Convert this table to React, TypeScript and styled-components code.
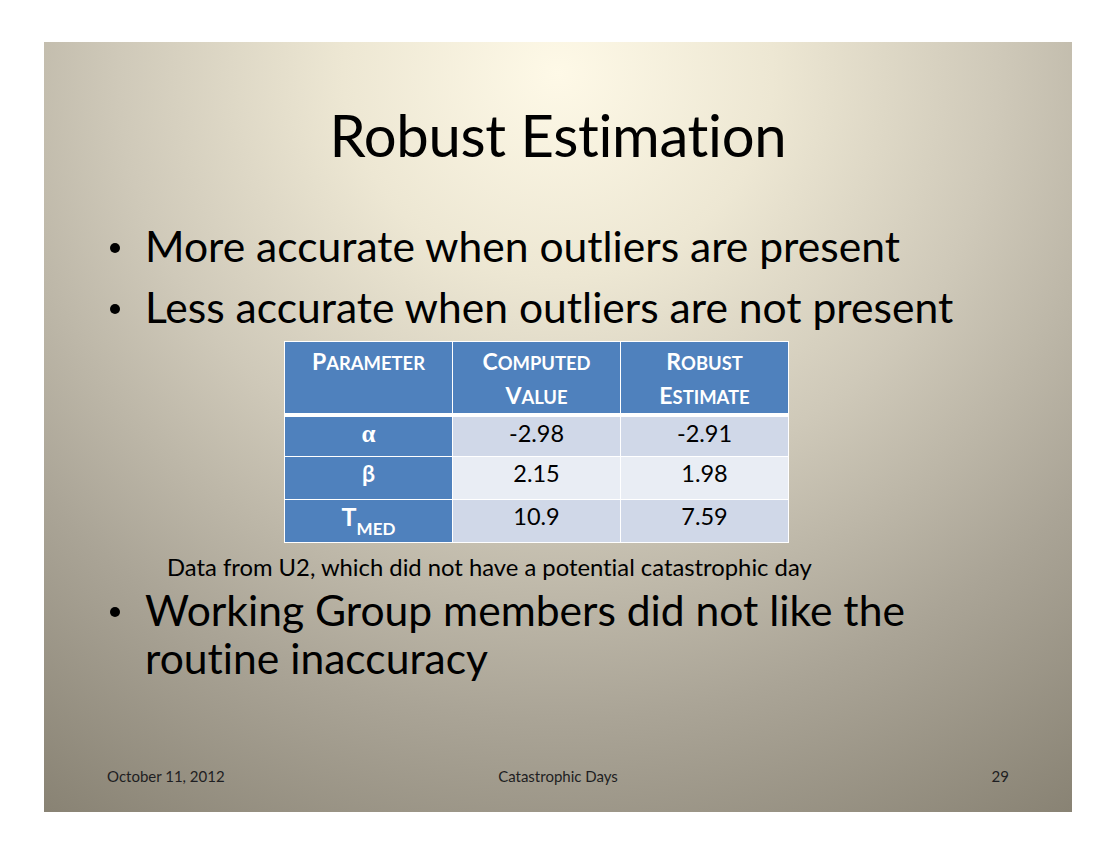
import styled, { createGlobalStyle } from "styled-components";

const GlobalStyle = createGlobalStyle`
  html, body {
    margin: 0;
    padding: 0;
    background: #ffffff;
  }
  body {
    font-family: Lato, "Open Sans", sans-serif;
    font-variant-ligatures: none;
  }
`;

type Row = { param: "alpha" | "beta" | "tmed"; computed: string; robust: string };

const rows: Row[] = [
  { param: "alpha", computed: "-2.98", robust: "-2.91" },
  { param: "beta", computed: "2.15", robust: "1.98" },
  { param: "tmed", computed: "10.9", robust: "7.59" },
];

function SmallCaps({ text }: { text: string }) {
  return (
    <>
      {text.split(" ").map((w, i) => (
        <span key={i}>
          {i > 0 ? " " : ""}
          {w[0]}
          <Small>{w.slice(1).toUpperCase()}</Small>
        </span>
      ))}
    </>
  );
}

function ParamLabel({ p }: { p: Row["param"] }) {
  if (p === "alpha") return <Greek serif>α</Greek>;
  if (p === "beta") return <Greek>β</Greek>;
  return (
    <Tee>
      T<Sub>MED</Sub>
    </Tee>
  );
}

export default function App() {
  return (
    <>
      <GlobalStyle />
      <Slide>
        <Title>Robust Estimation</Title>

        <Bullets>
          <Item>More accurate when outliers are present</Item>
          <Item>Less accurate when outliers are not present</Item>
        </Bullets>

        <Table>
          <thead>
            <tr>
              <Head>
                <SmallCaps text="Parameter" />
              </Head>
              <Head>
                <SmallCaps text="Computed" />
                <br />
                <SmallCaps text="Value" />
              </Head>
              <Head>
                <SmallCaps text="Robust" />
                <br />
                <SmallCaps text="Estimate" />
              </Head>
            </tr>
          </thead>
          <tbody>
            {rows.map((r, i) => (
              <tr key={r.param}>
                <ParamCell $h={i === 0 ? 41 : 43}>
                  <ParamLabel p={r.param} />
                </ParamCell>
                <Cell $alt={i % 2 === 1} $h={i === 0 ? 41 : 43}>
                  {r.computed}
                </Cell>
                <Cell $alt={i % 2 === 1} $h={i === 0 ? 41 : 43}>
                  {r.robust}
                </Cell>
              </tr>
            ))}
          </tbody>
        </Table>

        <Note>Data from U2, which did not have a potential catastrophic day</Note>

        <Bullets $tight>
          <Item>
            Working Group members did not like the
            <br />
            routine inaccuracy
          </Item>
        </Bullets>

        <Footer>
          <span>October 11, 2012</span>
          <FooterCenter>Catastrophic Days</FooterCenter>
          <FooterRight>29</FooterRight>
        </Footer>
      </Slide>
    </>
  );
}

const Slide = styled.div`
  width: 1028px;
  height: 770px;
  margin: 42px 0 0 44px;
  box-sizing: border-box;
  display: flex;
  flex-direction: column;
  padding-bottom: 26px;
  color: #000;
  background: radial-gradient(
    ellipse 95% 120% at 50% 4%,
    #fef9e7 0%,
    #ede7d3 22%,
    #cfc9b9 45%,
    #aaa496 70%,
    #837d6e 100%
  );
`;

const Title = styled.h1`
  margin: 58px 0 0;
  font-size: 58px;
  line-height: 70px;
  font-weight: 400;
  text-align: center;
  letter-spacing: -0.3px;
`;

const Bullets = styled.ul<{ $tight?: boolean }>`
  list-style: none;
  margin: ${(p) => (p.$tight ? "5px" : "52px")} 0 0 66px;
  padding: 0;
`;

const Item = styled.li`
  position: relative;
  padding-left: 35px;
  font-size: 42.6px;
  line-height: 48px;
  & + & {
    margin-top: 13px;
  }
  &::before {
    content: "";
    position: absolute;
    left: 0;
    top: 21px;
    width: 10px;
    height: 10px;
    border-radius: 50%;
    background: #000;
  }
`;

const Table = styled.table`
  margin: 10px 0 0 240px;
  width: 505px;
  border-collapse: collapse;
  table-layout: fixed;
  border: 1px solid #fff;
`;

const Head = styled.th`
  height: 67px;
  box-sizing: border-box;
  padding: 3px 0 0;
  vertical-align: top;
  background: #4f81bd;
  color: #fff;
  font-size: 23px;
  line-height: 32px;
  font-weight: 700;
  border: 1px solid #fff;
  border-bottom: 4px solid #fff;
`;

const Small = styled.span`
  font-size: 0.8em;
`;

const Cell = styled.td<{ $alt?: boolean; $h: number }>`
  height: ${(p) => p.$h}px;
  box-sizing: border-box;
  padding: 2px 0 0;
  vertical-align: top;
  text-align: center;
  font-size: 23.5px;
  line-height: 28px;
  background: ${(p) => (p.$alt ? "#e9edf4" : "#d0d8e8")};
  border: 1px solid #fff;
`;

const ParamCell = styled(Cell)`
  background: #4f81bd;
  color: #fff;
  font-weight: 700;
`;

const Greek = styled.span<{ serif?: boolean }>`
  font-family: ${(p) => (p.serif ? '"Liberation Serif", serif' : "Lato, sans-serif")};
  font-weight: 700;
  font-size: ${(p) => (p.serif ? "25px" : "23px")};
`;

const Tee = styled.span`
  font-size: 25px;
`;

const Sub = styled.sub`
  font-size: 17px;
  vertical-align: -9px;
  line-height: 0;
`;

const Note = styled.p`
  margin: 10px 0 0 123px;
  font-size: 23.8px;
  line-height: 28px;
`;

const Footer = styled.footer`
  margin-top: auto;
  padding: 0 63px;
  display: grid;
  grid-template-columns: 1fr auto 1fr;
  font-size: 15px;
  line-height: 20px;
  color: #1e1e22;
`;

const FooterCenter = styled.span`
  text-align: center;
`;

const FooterRight = styled.span`
  text-align: right;
`;
